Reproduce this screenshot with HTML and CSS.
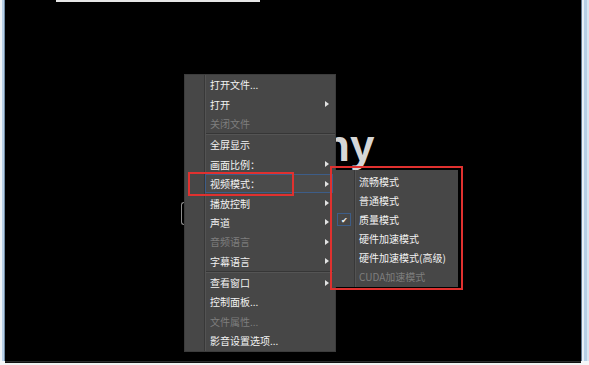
FILE: index.html
```html
<!DOCTYPE html>
<html lang="zh-CN">
<head>
    <meta charset="UTF-8">
    <meta name="viewport" content="width=device-width, initial-scale=1.0">
    <title>视频模式</title>
    <link rel="stylesheet" href="styles.css">
</head>
<body>
    <div class="frame">
        <div class="window">
            <div class="edge-left"></div>
            <div class="screen"></div>
            <div class="edge-right"></div>
        </div>
        <div class="edge-bottom"></div>

        <div class="glare"></div>
        <div class="logo">ny</div>
        <div class="bracket"></div>

        <!-- main context menu -->
        <ul class="menu">
            <li class="item">打开文件...</li>
            <li class="item sub">打开</li>
            <li class="item off">关闭文件</li>
            <li class="sep"></li>
            <li class="item">全屏显示</li>
            <li class="item sub">画面比例：</li>
            <li class="item sub active">视频模式：</li>
            <li class="item sub">播放控制</li>
            <li class="item sub">声道</li>
            <li class="item sub off">音频语言</li>
            <li class="item sub">字幕语言</li>
            <li class="sep"></li>
            <li class="item sub">查看窗口</li>
            <li class="item">控制面板...</li>
            <li class="item off">文件属性...</li>
            <li class="item">影音设置选项...</li>
        </ul>

        <!-- video mode submenu -->
        <ul class="submenu">
            <li class="subitem"><span class="icon"></span>流畅模式</li>
            <li class="subitem"><span class="icon"></span>普通模式</li>
            <li class="subitem"><span class="icon"><span class="check">&#10004;</span></span>质量模式</li>
            <li class="subitem"><span class="icon"></span>硬件加速模式</li>
            <li class="subitem"><span class="icon"></span>硬件加速模式(高级)</li>
            <li class="subitem off"><span class="icon"></span>CUDA加速模式</li>
        </ul>

        <div class="mark mark-item"></div>
        <div class="mark mark-sub"></div>
    </div>
</body>
</html>
```

FILE: styles.css
```css
* {
    box-sizing: border-box;
}

body {
    margin: 0;
    background-color: #ffffff;
    font-family: "Noto Sans CJK SC", "Noto Sans", sans-serif;
}

.frame {
    position: relative;
    width: 589px;
    height: 365px;
    overflow: hidden;
    background-color: #f4f6f8;
}

.window {
    display: flex;
    height: 361px;
}

.edge-left {
    width: 5px;
    background: linear-gradient(to right, #eef3f8 0 2px, #b9d1e8 2px 4px, #6f8aa3 4px);
}

.screen {
    flex: 1;
    background-color: #000000;
}

.edge-right {
    width: 8px;
    background: linear-gradient(to right, #5f7890 0 1px, #e8f0f8 1px 3px, #b6cfe6 3px 6px, #d8e6f2 6px);
}

.edge-bottom {
    height: 4px;
    margin: 0 8px 0 5px;
    background: linear-gradient(to bottom, #2c2c2c 0 1px, #111 1px 2px, #f2f2f2 2px);
}

.glare {
    position: absolute;
    left: 56px;
    top: 0;
    width: 204px;
    height: 2px;
    background-color: #e6e6e6;
}

.logo {
    position: absolute;
    left: 323px;
    top: 124px;
    font-family: "Liberation Sans", Arial, sans-serif;
    font-size: 44px;
    font-weight: bold;
    line-height: 1;
    color: #d6d6d6;
}

.bracket {
    position: absolute;
    left: 181px;
    top: 202px;
    width: 8px;
    height: 23px;
    border: 1px solid #8c8c8c;
    border-right: none;
    border-radius: 3px 0 0 3px;
}

.menu,
.submenu {
    position: absolute;
    margin: 0;
    padding: 0;
    list-style: none;
    font-size: 10px;
    color: #f2f2f2;
    background-color: #474747;
}

.menu {
    left: 185px;
    top: 75px;
    width: 150px;
    height: 276px;
    background: linear-gradient(to right, #474747 0 19px, #383838 19px 20px, #535353 20px 21px, #474747 21px);
    box-shadow: 0 0 0 1px #3c3c3c;
}

.item {
    display: flex;
    align-items: center;
    height: 19.4px;
    padding: 0 6px 0 25px;
    white-space: nowrap;
}

.item.sub::after {
    content: "";
    margin-left: auto;
    border-left: 4px solid #e2e2e2;
    border-top: 3px solid transparent;
    border-bottom: 3px solid transparent;
}

.item.off {
    color: #7e7e7e;
}

.item.active {
    margin: 0 2px 0 20px;
    padding: 0 4px 0 5px;
    background-color: #4b4b4b;
    box-shadow: inset 0 0 0 1px #3d5d88;
}

.sep {
    height: 2px;
    margin-left: 21px;
    border-top: 1px solid #363636;
    border-bottom: 1px solid #545454;
}

.submenu {
    left: 333px;
    top: 170px;
    width: 125px;
    height: 117px;
    padding-top: 2px;
    background: linear-gradient(to right, #474747 0 21px, #383838 21px 22px, #535353 22px 23px, #474747 23px);
}

.subitem {
    display: flex;
    align-items: center;
    height: 19px;
    white-space: nowrap;
}

.subitem.off {
    color: #7e7e7e;
}

.icon {
    display: flex;
    align-items: center;
    justify-content: center;
    width: 22px;
    height: 100%;
    margin-right: 4px;
}

.check {
    display: flex;
    align-items: center;
    justify-content: center;
    width: 14px;
    height: 13px;
    border: 1px solid #3d5d88;
    font-size: 8px;
    color: #f4f4f4;
}

.mark {
    position: absolute;
    border: 2px solid #e0312f;
}

.mark-item {
    left: 188px;
    top: 172px;
    width: 106px;
    height: 24px;
}

.mark-sub {
    left: 330px;
    top: 166px;
    width: 133px;
    height: 124px;
}
```
